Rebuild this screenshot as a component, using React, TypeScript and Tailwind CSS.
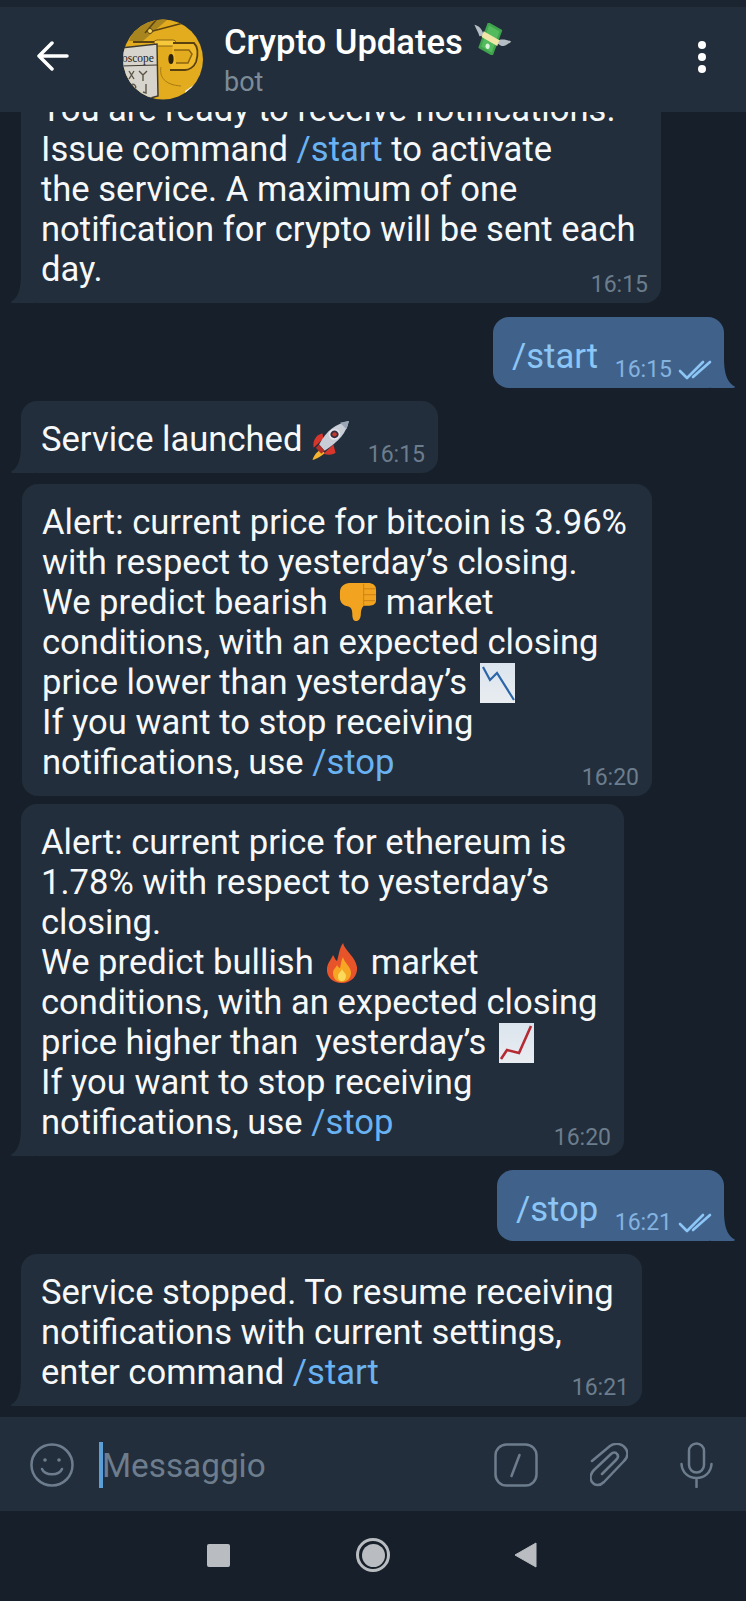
import React from 'react';

const font = { fontFamily: 'Roboto, "Noto Sans", sans-serif' };

function Link({ children }: { children: React.ReactNode }) {
  return <span className="text-[#6ab3f3]">{children}</span>;
}

function TailLeft() {
  return (
    <svg className="absolute bottom-0 left-[-10px]" width="24" height="30" viewBox="0 0 24 30">
      <path d="M24 0V30H2C0 30 -0.500 29 1 28C6 25 10 19 10 0Z" fill="#222e3b" />
    </svg>
  );
}

function TailRight() {
  return (
    <svg className="absolute bottom-0 right-[-11px]" width="24" height="30" viewBox="0 0 24 30">
      <path d="M0 0V30H22C24 30 24.500 29 23 28C18 25 13 19 13 0Z" fill="#40628a" />
    </svg>
  );
}

function InBubble({ width, tail = true, time, mt, children }: { width: string; tail?: boolean; time: string; mt: string; children: React.ReactNode }) {
  return (
    <div className={`relative shrink-0 self-start ml-[21px] rounded-[16px] bg-[#222e3b] px-[20px] pt-[18px] pb-[14px] text-[34.600px] leading-[40px] text-[#f6f8fa] ${width} ${mt}`}>
      {tail && <TailLeft />}
      <div className="relative whitespace-nowrap">{children}</div>
      <span className="absolute bottom-[3px] right-[13px] text-[23px] leading-[30px] text-[#6c7d8d]">{time}</span>
    </div>
  );
}

function OutBubble({ width, time, mt, children }: { width: string; time: string; mt: string; children: React.ReactNode }) {
  return (
    <div className={`relative shrink-0 self-end mr-[22px] flex h-[71px] items-center rounded-[16px] bg-[#40628a] pl-[19px] text-[34.600px] text-[#8cc6f7] ${width} ${mt}`}>
      <TailRight />
      <span className="relative top-[4px]">{children}</span>
      <span className="absolute bottom-[3px] right-[12px] flex items-center gap-[6px] text-[23px] leading-[30px] text-[#84b3e0]">
        {time}
        <svg width="34" height="20" viewBox="0 0 34 20" fill="none" stroke="#8cc6f7" strokeWidth="2.600" strokeLinecap="round" strokeLinejoin="round">
          <path d="M2 11L9 18L25 2" />
          <path d="M15 17L32 2" />
        </svg>
      </span>
    </div>
  );
}

function Rocket() {
  return (
    <svg className="my-[-10px] ml-[-4px] inline-block align-[0px]" width="44" height="41" viewBox="0 0 40 40" preserveAspectRatio="none">
      <path d="M6 27L15 18L14 13C8 15 5 20 6 27Z" fill="#d6362c" />
      <path d="M26 32L24 24L15 33C21 35 25 33 26 32Z" fill="#d6362c" />
      <path d="M12 29C9 31 6 35 5 39C9 38 14 35 16 32Z" fill="#f3b22f" />
      <path d="M11 24C18 10 26 4 38 1C36 12 29 21 16 30Z" fill="#c9ced6" />
      <path d="M30 2.800C33 2 36 1.400 38 1C37.500 4 36.800 6.500 36 9C34 7 32 5 30 2.800Z" fill="#9aa5b5" />
      <circle cx="25" cy="14" r="4.500" fill="#3a2b3f" stroke="#e4e7ec" strokeWidth="1.500" />
      <circle cx="25" cy="14" r="2" fill="#c0392b" />
      <path d="M11 24L16 30L13 33L8 27Z" fill="#b5302a" />
    </svg>
  );
}

function ThumbDown() {
  return (
    <svg className="my-[-10px] ml-[3px] inline-block align-[2px]" width="38" height="40" viewBox="0 0 40 44" preserveAspectRatio="none">
      <path d="M1 11C1 5 6 1 11 1H30C36 1 39 4 39 8V20C39 24 36 26 32 26H26C24 28 23 31 23 35C23 40 21 43 18 43C15 43 14 40 14 35C14 31 13 28 10 27C4 26 1 22 1 17Z" fill="#f2a421" />
      <path d="M26 7.500H39M26 14H39M26 20.500H38M26 2V26" stroke="#c97f14" strokeWidth="1" fill="none" />
    </svg>
  );
}

function ChartCard({ up }: { up: boolean }) {
  const id = up ? 'card-up' : 'card-down';
  return (
    <svg className="my-[-10px] ml-[4px] inline-block align-[1px]" width="35" height="40" viewBox="0 0 35 40">
      <defs>
        <linearGradient id={id} x1="0" y1="0" x2="0" y2="1">
          <stop offset="0" stopColor="#dbe4ee" />
          <stop offset="1" stopColor="#e9edf1" />
        </linearGradient>
      </defs>
      <rect width="35" height="40" fill={`url(#${id})`} />
      {up ? (
        <path d="M2 36L8 27L20 30L32 3" fill="none" stroke="#b52a32" strokeWidth="2.600" />
      ) : (
        <path d="M3 4L10 17L17 10L34 37" fill="none" stroke="#2a66a8" strokeWidth="2.200" />
      )}
    </svg>
  );
}

function Fire() {
  return (
    <svg className="my-[-10px] inline-block align-[1px]" width="40" height="40" viewBox="-2 0 40 40">
      <path d="M19 0C21 8 31 13 33 24C34 33 27 40 18 40C9 40 2 34 3 25C4 19 7 17 9 12C11 15 11 17 13 18C15 12 15 6 19 0Z" fill="#e8542a" />
      <path d="M19 14C20 20 27 23 27 30C27 35 23 39 18 39C12 39 9 35 9 30C9 26 12 25 13 22C14 24 15 25 16 25C17 21 17 18 19 14Z" fill="#f6a623" />
      <path d="M18 26C19 29 22 30 22 33C22 36 20 38 18 38C15 38 14 36 14 33C14 30 17 29 18 26Z" fill="#fbd95b" />
    </svg>
  );
}

function MoneyWings() {
  return (
    <svg className="ml-[10px] mt-[-8px]" width="39" height="32" viewBox="0 0 54 36" preserveAspectRatio="none">
      <path d="M2 2C8 3 13 7 15 14L9 15C7 10 4 6 2 2Z" fill="#b5bec4" />
      <path d="M36 19C42 18 48 19 53 21C49 23 47 25 42 26C39 26 36 24 34 23Z" fill="#b5bec4" />
      <g transform="rotate(25 24 18)">
        <rect x="13" y="2" width="22" height="32" rx="1" fill="#3fa34d" />
        <rect x="16" y="5" width="16" height="26" fill="#52bb5d" />
        <rect x="12" y="14" width="24" height="7" fill="#efe6a8" />
        <circle cx="24" cy="27" r="3" fill="#d9f2d9" />
      </g>
    </svg>
  );
}

function Avatar() {
  return (
    <svg width="80" height="81" viewBox="0 0 80 81" className="shrink-0">
      <defs>
        <clipPath id="avatar-clip">
          <circle cx="40" cy="40.500" r="40" />
        </clipPath>
      </defs>
      <g clipPath="url(#avatar-clip)">
        <rect width="80" height="81" fill="#e3ab1e" />
        <path d="M15 0H45L20 22H6Z" fill="#a9851f" />
        <path d="M22 14L34 0M26 13L64 3" stroke="#5b4412" strokeWidth="1.500" fill="none" />
        <circle cx="27" cy="12" r="2.500" fill="#f7d765" stroke="#5b4412" />
        <path d="M10 23L31 23" stroke="#5b4412" strokeWidth="2" />
        <rect x="31" y="21" width="22" height="6" rx="3" fill="#f7c93a" stroke="#8a6512" />
        <path d="M50 24H71C75 28 76 33 73 43C71 48 66 51 62 51H47" fill="#f0b92a" stroke="#5a420e" strokeWidth="1.800" />
        <path d="M51 31H66L69 35L65 44H53" fill="#e3ab1e" stroke="#8a6512" strokeWidth="1.500" />
        <ellipse cx="48" cy="40" rx="2.600" ry="5" fill="#2c2208" />
        <path d="M38 48C36 58 42 66 58 67" stroke="#a67b12" strokeWidth="1" fill="none" />
        <path d="M62 72L72 65L77 70L64 81Z" fill="#f2f2f2" />
        <path d="M-2 29L34 25L35 77L20 81L-2 76Z" fill="#d6d4cd" stroke="#403a2e" strokeWidth="1.500" />
        <text x="-1" y="43" fontSize="11.500" fontFamily="Liberation Serif, serif" fill="#25221c">oscope</text>
        <path d="M-2 47L34 46" stroke="#403a2e" strokeWidth="1" />
        <path d="M6 52L11 60M11 52L6 60M16 52L20 56L24 52M20 56V62M8 66C11 64 14 67 12 70M23 65V74L20 73" stroke="#5a5446" strokeWidth="1.400" fill="none" />
      </g>
    </svg>
  );
}

export default function App() {
  return (
    <div className="flex h-[1601px] w-[746px] flex-col overflow-hidden bg-[#17202a]" style={font}>
      <div className="h-[7px] shrink-0 bg-[#1a2531]" />
      <header className="z-10 flex h-[105px] shrink-0 items-center bg-[#222e3b]">
        <svg className="ml-[37px] mt-[-8px]" width="32" height="30" viewBox="0 0 32 30" fill="none" stroke="white" strokeWidth="3.500" strokeLinecap="round" strokeLinejoin="round">
          <path d="M2 15H30M15 2L2 15L15 28" />
        </svg>
        <div className="ml-[54px]"><Avatar /></div>
        <div className="ml-[21px] mt-[-4px] flex flex-col">
          <div className="flex h-[48px] items-center text-[34.600px] font-medium text-white">
            Crypto Updates
            <MoneyWings />
          </div>
          <div className="text-[27px] leading-[30px] text-[#7d8b99]">bot</div>
        </div>
        <div className="ml-auto mr-[40px] mt-[-6px] flex flex-col gap-[4px]">
          <div className="h-[8px] w-[8px] rounded-full bg-white" />
          <div className="h-[8px] w-[8px] rounded-full bg-white" />
          <div className="h-[8px] w-[8px] rounded-full bg-white" />
        </div>
      </header>

      <main className="flex min-h-0 flex-1 flex-col justify-end overflow-hidden pb-[11px]">
        <InBubble width="w-[640px]" time="16:15" mt="">
          You are ready to receive notifications.<br />
          Issue command <Link>/start</Link> to activate<br />
          the service. A maximum of one<br />
          notification for crypto will be sent each<br />
          day.
        </InBubble>
        <OutBubble width="w-[231px]" time="16:15" mt="mt-[14px]">/start</OutBubble>
        <InBubble width="w-[417px]" time="16:15" mt="mt-[13px]">
          Service launched <Rocket />
        </InBubble>
        <InBubble width="w-[630px] !ml-[22px]" tail={false} time="16:20" mt="mt-[11px]">
          Alert: current price for bitcoin is 3.96%<br />
          with respect to yesterday’s closing.<br />
          We predict bearish <ThumbDown /> market<br />
          conditions, with an expected closing<br />
          price lower than yesterday’s <ChartCard up={false} /><br />
          If you want to stop receiving<br />
          notifications, use <Link>/stop</Link>
        </InBubble>
        <InBubble width="w-[603px]" time="16:20" mt="mt-[8px]">
          Alert: current price for ethereum is<br />
          1.78% with respect to yesterday’s<br />
          closing.<br />
          We predict bullish <Fire /> market<br />
          conditions, with an expected closing<br />
          price higher than&nbsp; yesterday’s <ChartCard up /><br />
          If you want to stop receiving<br />
          notifications, use <Link>/stop</Link>
        </InBubble>
        <OutBubble width="w-[227px]" time="16:21" mt="mt-[14px]">/stop</OutBubble>
        <InBubble width="w-[621px]" time="16:21" mt="mt-[13px]">
          Service stopped. To resume receiving<br />
          notifications with current settings,<br />
          enter command <Link>/start</Link>
        </InBubble>
      </main>

      <footer className="flex h-[94px] shrink-0 items-center bg-[#222e3b] pt-[2px]">
        <svg className="ml-[30px]" width="44" height="44" viewBox="0 0 44 44" fill="none" stroke="#6d7d8d" strokeWidth="2.500" strokeLinecap="round">
          <circle cx="22" cy="22" r="20.500" />
          <path d="M12 26C15 33 29 33 32 26" />
          <circle cx="15" cy="17" r="1.800" fill="#6d7d8d" stroke="none" />
          <circle cx="29" cy="17" r="1.800" fill="#6d7d8d" stroke="none" />
        </svg>
        <div className="ml-[25px] h-[46px] w-[4px] bg-[#5b9fd6]" />
        <span className="relative top-[1px] ml-[-1px] text-[33.300px] text-[#6d7d8d]">Messaggio</span>
        <svg className="ml-auto" width="44" height="44" viewBox="0 0 44 44" fill="none" stroke="#6d7d8d" strokeWidth="2.500" strokeLinecap="round">
          <rect x="1.500" y="1.500" width="41" height="41" rx="11" />
          <path d="M25.500 12L17.500 33" />
        </svg>
        <svg className="ml-[52px]" width="38" height="44" viewBox="0 0 38 44" fill="none" stroke="#6d7d8d" strokeWidth="2.500" strokeLinecap="round" strokeLinejoin="round">
          <path d="M2 18L20 3C26 -1 33 1 36 6C39 11 37 15 34 18L14 39C10 43 5 43 2 39C-1 35 1 30 4 27L21 11C23 9 26 9 27 11C29 13 28 15 26 17L12 31" />
        </svg>
        <svg className="ml-[52px] mr-[33px]" width="33" height="46" viewBox="0 0 33 46" fill="none" stroke="#6d7d8d" strokeWidth="2.500" strokeLinecap="round">
          <rect x="9" y="1.500" width="15" height="29" rx="7.500" />
          <path d="M1.500 22C2 31 9 36 16.500 36C24 36 31 31 31.500 22M16.500 36V45" />
        </svg>
      </footer>

      <nav className="flex h-[90px] shrink-0 items-center pb-[2px]">
        <div className="ml-[207px] h-[23px] w-[23px] rounded-[2px] bg-[#b9bdc1]" />
        <div className="ml-[126px] flex h-[34px] w-[34px] items-center justify-center rounded-full border-[3px] border-[#b9bdc1]">
          <div className="h-[23px] w-[23px] rounded-full bg-[#b9bdc1]" />
        </div>
        <svg className="ml-[124px]" width="23" height="26" viewBox="0 0 23 26">
          <path d="M22 1V25L1 13Z" fill="#b9bdc1" stroke="#b9bdc1" strokeLinejoin="round" />
        </svg>
      </nav>
    </div>
  );
}
